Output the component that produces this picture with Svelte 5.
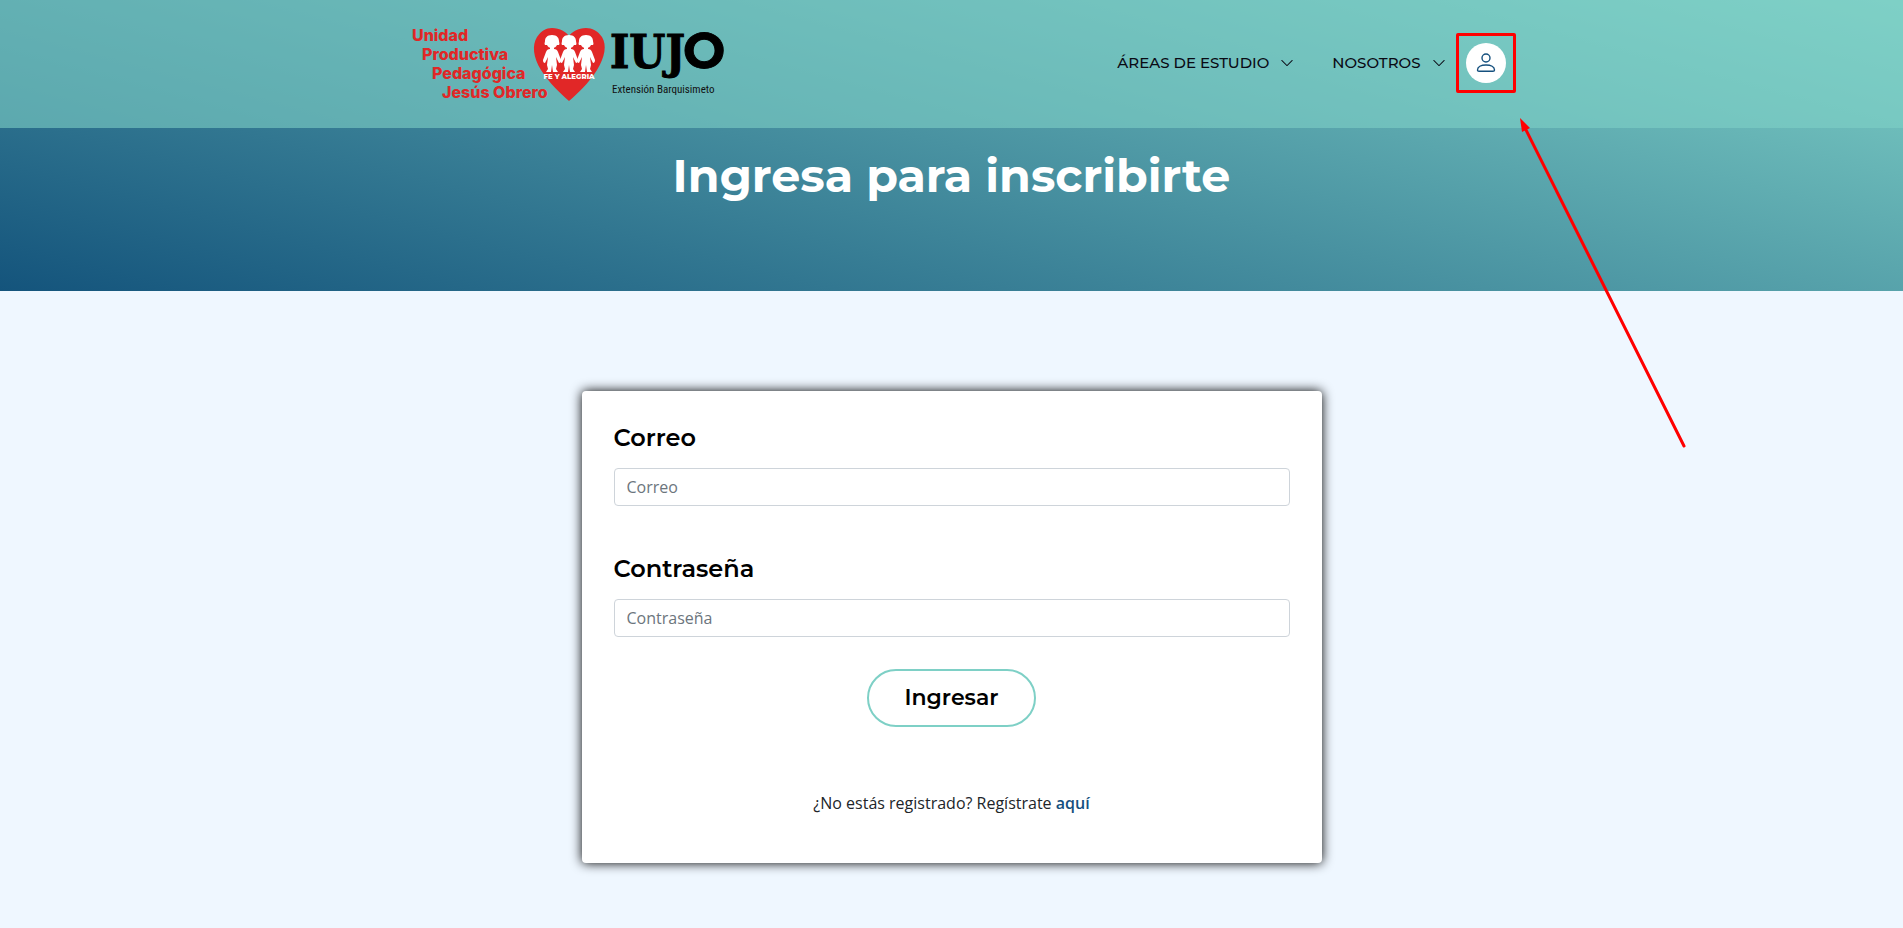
<script lang="ts">
	const menu = ['Áreas de estudio', 'Nosotros']

	let email = $state('')
	let password = $state('')

	function submit(event: SubmitEvent) {
		event.preventDefault()
	}
</script>

<div class="page">
	<div class="hero">
		<header class="navbar">
			<div class="container">
				<a class="brand" href="/" aria-label="IUJO Extensión Barquisimeto">
					<svg width="320" height="84" viewBox="0 0 320 84">
						<g class="brand-name">
							<text x="1" y="19">Unidad</text>
							<text x="11" y="38">Productiva</text>
							<text x="21" y="57">Pedagógica</text>
							<text x="31" y="76">Jesús Obrero</text>
						</g>
						<path
							fill="#e12727"
							d="M158 79C150 72 138 61 130 48C122 35 121 23 126 15C130 9 135 6 141 6C149 6 155 10 158 14C161 10 167 6 175 6C181 6 187 9 191 15C196 23 194 35 186 48C178 61 166 72 158 79Z"
						/>
						<g fill="#fff">
							{#each [141, 158, 175] as x}
								<g transform="translate({x} 0)">
									<path
										d="M0 13C5 13 7 16 7 19C7 20 8 22 7 23L5 23C4 25 3 26 0 26C-3 26-4 25-5 23L-7 23C-8 22-7 20-7 19C-7 16-5 13 0 13Z"
									/>
									<path
										d="M-2 24H2V27Q5 27 6 30L9 38Q9 41 7 41L4 35L5 43L4 47L6 50H1L0 43L-1 50H-6L-4 47L-5 43L-4 35L-7 41Q-9 41-9 38L-6 30Q-5 27-2 27Z"
									/>
								</g>
							{/each}
						</g>
						<text class="heart-text" x="158" y="57" text-anchor="middle">FE Y ALEGRIA</text>
						<text class="initials" x="199" y="46">IUJ</text>
						<text class="initials round" x="272" y="46">O</text>
						<text class="campus" x="201" y="71">Extensión Barquisimeto</text>
					</svg>
				</a>

				<nav>
					{#each menu as item}
						<a class="nav-link" href="/">
							{item}
							<svg class="chevron" viewBox="0 0 16 16" fill="currentColor">
								<path
									d="M1.65 4.65a.5.5 0 0 1 .7 0L8 10.29l5.65-5.64a.5.5 0 0 1 .7.7l-6 6a.5.5 0 0 1-.7 0l-6-6a.5.5 0 0 1 0-.7z"
								/>
							</svg>
						</a>
					{/each}
					<div class="account">
						<button type="button" aria-label="Ingresar a mi cuenta">
							<svg width="20" height="20" viewBox="0 0 20 20" fill="none" stroke="#15507e">
								<circle cx="10" cy="5" r="4" stroke-width="1.4" />
								<path
									stroke-width="1.4"
									d="M3 18.3Q1.500 18.300 1.500 17C1.500 14 5 12 10 12S18.500 14 18.500 17Q18.500 18.300 17 18.300Z"
								/>
							</svg>
						</button>
						<span class="marker"></span>
						<svg class="arrow" width="172" height="336" viewBox="0 0 172 336">
							<path d="M7 11L166 329" stroke="#f00" stroke-width="3" stroke-linecap="round" />
							<path d="M2 1L12 11L4 15Z" fill="#f00" />
						</svg>
					</div>
				</nav>
			</div>
		</header>
		<h1>Ingresa para inscribirte</h1>
	</div>

	<main>
		<form class="card" onsubmit={submit}>
			<div class="field">
				<label for="email">Correo</label>
				<input id="email" type="email" placeholder="Correo" bind:value={email} />
			</div>
			<div class="field">
				<label for="password">Contraseña</label>
				<input id="password" type="password" placeholder="Contraseña" bind:value={password} />
			</div>
			<button class="submit" type="submit">Ingresar</button>
			<p>¿No estás registrado? Regístrate <a href="/">aquí</a></p>
		</form>
	</main>
</div>

<style>
	:global(body) {
		background: #eff7ff;
	}

	.page {
		min-height: 100vh;
		overflow: hidden;
		font-family: 'Open Sans', sans-serif;
		font-size: 16px;
		line-height: 24px;
		color: #212529;
	}

	.hero {
		padding-bottom: 87px;
		background: linear-gradient(15deg, #14547c, #7ed0c6);
	}

	.navbar {
		position: relative;
		z-index: 1;
		background: rgba(126, 208, 198, 0.6);
	}

	.container {
		display: flex;
		align-items: center;
		justify-content: space-between;
		box-sizing: border-box;
		max-width: 1140px;
		min-height: 128px;
		margin: 0 auto;
		padding: 0 16px 0 15px;
	}

	.brand {
		display: flex;
		margin-left: 14px;
		color: #000;
	}

	.brand svg {
		overflow: visible;
	}

	.brand-name {
		font: 800 16px Inter, sans-serif;
		fill: #e12727;
	}

	.heart-text {
		font: 800 7px Montserrat, Inter, sans-serif;
		fill: #fff;
	}

	.initials {
		font: bold 46px 'DejaVu Serif Condensed', 'DejaVu Serif', serif;
		stroke: #000;
		stroke-width: 1px;
	}

	.round {
		font: 700 50px Montserrat, Inter, sans-serif;
	}

	.campus {
		font: 11px 'Liberation Sans Narrow', 'Roboto Condensed', sans-serif;
		fill: #111;
	}

	nav {
		display: flex;
		align-items: center;
		padding-bottom: 2px;
	}

	.nav-link {
		display: flex;
		align-items: center;
		gap: 11px;
		margin-right: 38px;
		font-family: Montserrat, Inter, sans-serif;
		font-size: 15px;
		font-weight: 500;
		text-transform: uppercase;
		text-decoration: none;
		color: #0a0a14;
	}

	.nav-link:nth-of-type(2) {
		margin-right: 20px;
	}

	.chevron {
		width: 14px;
		height: 14px;
	}

	.account {
		position: relative;
	}

	.account button {
		display: flex;
		align-items: center;
		justify-content: center;
		width: 40px;
		height: 40px;
		padding: 0;
		border: 0;
		border-radius: 50%;
		background: #fff;
		cursor: pointer;
	}

	.marker {
		position: absolute;
		inset: -10px;
		border: 3px solid #f00;
		border-radius: 2px;
		pointer-events: none;
	}

	.arrow {
		position: absolute;
		top: 74px;
		left: 52px;
		pointer-events: none;
	}

	h1 {
		margin: 0;
		padding-top: 20px;
		font-family: Montserrat, Inter, sans-serif;
		font-size: 46px;
		font-weight: 700;
		line-height: 56px;
		text-align: center;
		color: #fff;
	}

	main {
		padding: 100px 16px 64px;
	}

	.card {
		display: flex;
		flex-direction: column;
		box-sizing: border-box;
		max-width: 740px;
		margin: 0 auto;
		padding: 32px 32px 48px;
		border-radius: 4px;
		background: #fff;
		box-shadow: 0 0 12px #000;
	}

	.field {
		display: flex;
		flex-direction: column;
		gap: 16px;
		margin-bottom: 32px;
	}

	.field + .field {
		padding-top: 16px;
	}

	label {
		font-family: Montserrat, Inter, sans-serif;
		font-size: 24px;
		font-weight: 600;
		line-height: 29px;
		color: #000;
	}

	input {
		box-sizing: border-box;
		width: 100%;
		height: 38px;
		padding: 6px 12px;
		border: 1px solid #ced4da;
		border-radius: 4px;
		font: inherit;
		color: #495057;
	}

	input::placeholder {
		color: #6c757d;
	}

	.submit {
		align-self: center;
		padding: 12px 35px;
		border: 2px solid #7ed0c6;
		border-radius: 29px;
		background: #fff;
		font-family: Montserrat, Inter, sans-serif;
		font-size: 22px;
		font-weight: 600;
		line-height: 30px;
		color: #000;
		cursor: pointer;
	}

	p {
		margin: 64px 0 0;
		text-align: center;
	}

	p a {
		font-weight: 600;
		text-decoration: none;
		color: #15507e;
	}
</style>
